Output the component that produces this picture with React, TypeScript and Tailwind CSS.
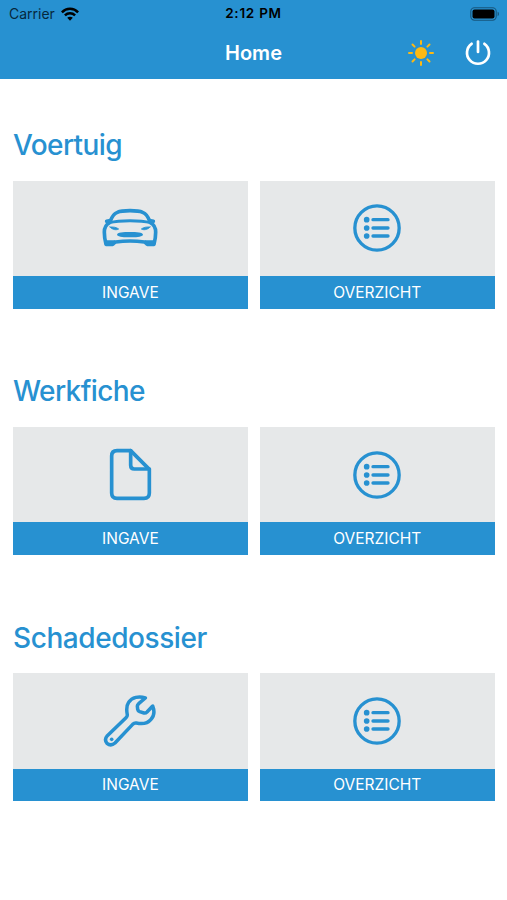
import type { ReactNode } from 'react';

const CarIcon = () => (
  <svg
    className="w-[60px] h-[40px]"
    viewBox="32 39 180 120"
    fill="none"
    stroke="currentColor"
    strokeWidth="11"
    strokeLinecap="round"
    strokeLinejoin="round"
  >
    <path d="M63 79C67 66 74 56 84 52C95 47 108 47 122 47C136 47 149 47 160 52C170 56 177 66 181 79" />
    <path d="M60 83C80 78 102 77 122 77C142 77 164 78 184 83" strokeWidth="9" />
    <path d="M61 83C49 89 45 99 45 112C45 128 47 137 50 148H70C74 145 75 142 79 141C107 137 137 137 165 141C169 142 170 145 174 148H194C197 137 199 128 199 112C199 99 195 89 183 83" />
    <path d="M52 79L60 77M192 79L184 77" strokeWidth="11" />
    <path d="M48 136H78L68 152H52ZM196 136H166L176 152H192Z" fill="currentColor" stroke="none" />
    <path d="M62 96C72 95 82 97 88 102C82 106 69 105 62 96ZM182 96C172 95 162 97 156 102C162 106 175 105 182 96Z" fill="currentColor" strokeWidth="2.5" />
    <path d="M83 120C83 111 102 111 122 111C142 111 161 111 161 120C156 127 138 127 122 127C106 127 88 127 83 120Z" fill="currentColor" stroke="none" />
  </svg>
);

const ListIcon = () => (
  <svg className="w-[50px] h-[50px]" viewBox="38 25 150 150" fill="none" stroke="currentColor" strokeLinecap="round">
    <circle cx="113" cy="100" r="66.5" strokeWidth="10" />
    <path d="M101 75H146M101 100H146M101 124H146" strokeWidth="10" />
    <g fill="currentColor" stroke="none">
      <circle cx="82" cy="75" r="8.5" />
      <circle cx="82" cy="100" r="8.5" />
      <circle cx="82" cy="124" r="8.5" />
    </g>
  </svg>
);

const FileIcon = () => (
  <svg
    className="w-[45px] h-[55px]"
    viewBox="54 22 135 165"
    fill="none"
    stroke="currentColor"
    strokeWidth="11"
    strokeLinecap="round"
    strokeLinejoin="round"
  >
    <path d="M122 33H81Q65 33 65 49V160Q65 176 81 176H162Q178 176 178 160V89Z" />
    <path d="M122 33V77Q122 88 133 88H178" />
  </svg>
);

const WrenchIcon = () => (
  <svg
    className="w-[56px] h-[56px]"
    viewBox="38 22 168 168"
    fill="none"
    stroke="currentColor"
    strokeWidth="10.5"
    strokeLinecap="round"
    strokeLinejoin="round"
  >
    <path d="M168 37C149 30 128 35 118 50C111 60 111 73 114 88C114 92 112 94 110 96L54 150C47 158 47 166 53 173C60 179 69 179 77 172L130 116C133 113 136 111 141 112C159 116 176 112 185 101C195 90 196 76 190 61L173 79Q169 83 164 82L151 78Q146 76 145 71L144 61Q144 58 148 54Z" />
    <circle cx="67" cy="161" r="5.5" fill="currentColor" stroke="none" />
  </svg>
);

const SunIcon = () => (
  <svg className="w-[28px] h-[28px]" viewBox="0 0 28 28" stroke="#fdb913" strokeWidth="2" strokeLinecap="round">
    <circle cx="14" cy="14" r="6" fill="#fdb913" stroke="none" />
    <path d="M14 2V5M14 23V26M2 14H5M23 14H26M5.5 5.5L7.6 7.6M20.4 20.4L22.5 22.5M5.5 22.5L7.6 20.4M20.4 7.6L22.5 5.5" />
  </svg>
);

const PowerIcon = () => (
  <svg className="w-[28px] h-[28px]" viewBox="0 0 28 28" fill="none" stroke="white" strokeWidth="2.7" strokeLinecap="round">
    <path d="M14 2.6V13" />
    <path d="M7.6 4.8A11 11 0 1 0 20.4 4.8" />
  </svg>
);

const WifiIcon = () => (
  <svg className="w-[18px] h-[14px]" viewBox="0 0 18 14" fill="none" stroke="black" strokeWidth="2.5">
    <path d="M.9 5.3C5.4.7 12.6.7 17.1 5.3" />
    <path d="M3.9 8.3C6.8 5.5 11.2 5.5 14.1 8.3" />
    <path d="M9 13.7L6.2 10.8C7.8 9.3 10.2 9.3 11.8 10.8Z" fill="black" stroke="none" />
  </svg>
);

const BatteryIcon = () => (
  <svg className="w-[30px] h-[14px]" viewBox="0 0 30 14">
    <rect x=".8" y=".8" width="25.4" height="12.4" rx="3.6" fill="none" stroke="#17567c" strokeWidth="1.1" />
    <rect x="2.5" y="2.5" width="22" height="9" rx="2" fill="black" />
    <path d="M27.6 4.8C29.4 5.4 29.4 8.6 27.6 9.2Z" fill="#17567c" />
  </svg>
);

const Tile = ({ icon, label }: { icon: ReactNode; label: string }) => (
  <button className="flex flex-col w-full text-[#2791d1]">
    <span className="flex h-[95.4px] w-full items-center justify-center bg-[#e6e8e9]">{icon}</span>
    <span className="flex h-[32.6px] w-full items-center justify-center bg-[#2791d1] text-[15.5px] text-white">
      {label}
    </span>
  </button>
);

const sections = [
  { title: 'Voertuig', icon: <CarIcon />, spacing: 'tracking-[-0.6px]' },
  { title: 'Werkfiche', icon: <FileIcon />, spacing: 'tracking-[-0.6px]' },
  { title: 'Schadedossier', icon: <WrenchIcon />, spacing: 'tracking-[-0.43px]' },
];

export default function App() {
  return (
    <div className="h-[900px] w-full overflow-hidden bg-white font-['Inter',sans-serif]">
      <header className="h-[79px] bg-[#2791d1]">
        <div className="grid h-[27px] grid-cols-[1fr_auto_1fr] items-center px-[7px] text-[14px] text-black">
          <div className="flex items-center gap-[6px] pl-[2px]">
            <span className="text-[#06283d]">Carrier</span>
            <WifiIcon />
          </div>
          <span className="text-[13.5px] font-semibold tracking-[0.75px]">2:12 PM</span>
          <div className="flex justify-end">
            <BatteryIcon />
          </div>
        </div>
        <div className="grid h-[51px] grid-cols-[1fr_auto_1fr] items-center px-[15px]">
          <h1 className="col-start-2 text-[20px] font-semibold text-white">Home</h1>
          <div className="flex justify-end gap-[29px]">
            <button aria-label="Thema">
              <SunIcon />
            </button>
            <button aria-label="Afmelden">
              <PowerIcon />
            </button>
          </div>
        </div>
      </header>

      <main className="flex flex-col gap-[65.7px] pt-[49px] pr-[12.3px] pl-[13px]">
        {sections.map((section) => (
          <section key={section.title}>
            <h2 className={`mb-[17.6px] text-[28px] leading-[35px] font-medium text-[#2791d1] ${section.spacing}`}>
              {section.title}
            </h2>
            <div className="grid grid-cols-2 gap-3">
              <Tile icon={section.icon} label="INGAVE" />
              <Tile icon={<ListIcon />} label="OVERZICHT" />
            </div>
          </section>
        ))}
      </main>
    </div>
  );
}
